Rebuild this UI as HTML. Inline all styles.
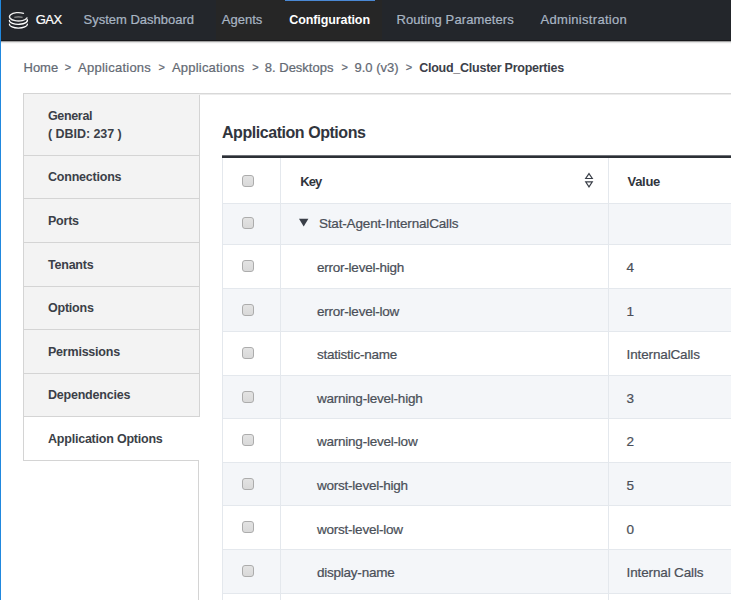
<!DOCTYPE html>
<html>
<head>
<meta charset="utf-8">
<style>
html,body{margin:0;padding:0;}
body{width:731px;height:600px;overflow:hidden;position:relative;background:#fff;font-family:"Liberation Sans",sans-serif;}
.a{position:absolute;white-space:nowrap;line-height:1;}
.r{-webkit-text-stroke:0.22px currentColor;}
.b{position:absolute;}
</style>
</head>
<body>
<div class="b" style="left:0px;top:0px;width:731px;height:40px;background:#23262b;"></div>
<div class="b" style="left:216px;top:0px;width:166px;height:40px;background:#262626;"></div>
<div class="b" style="left:285px;top:0px;width:90px;height:1px;background:#4a88d4;"></div>
<div class="b" style="left:0px;top:40px;width:731px;height:1px;background:#18191c;"></div>
<div class="b" style="left:0px;top:41px;width:731px;height:1px;background:#a2a2a2;"></div>
<div class="b" style="left:0px;top:42px;width:731px;height:1px;background:#e4e4e4;"></div>
<div class="b" style="left:0px;top:43px;width:731px;height:1px;background:#f9f9f9;"></div>
<svg style="position:absolute;left:0;top:0" width="40" height="40" viewBox="0 0 40 40">
  <path d="M14.3 17.2 Q18.4 16.5 22.6 17.2" fill="none" stroke="#9c9c9c" stroke-width="1.1"/>
  <g fill="none" stroke="#fff" stroke-width="1.3" stroke-linecap="round">
    <path d="M23.5 13.36 A8.9 4.2 0 1 0 27.0 17.9" stroke="#eeeeee"/>
    <path d="M9.4 20.5 A9 3.8 0 1 0 27.1 19.5"/>
    <path d="M9.4 24.2 A9 3.9 0 0 0 27.4 24.2"/>
  </g>
</svg>
<div class="a r" style="left:35.80px;top:13.40px;font-size:13px;color:#fff;letter-spacing:-0.6px;">GAX</div>
<div class="a r" style="left:83.50px;top:13.40px;font-size:13px;color:#a8b5c3;">System Dashboard</div>
<div class="a r" style="left:221.80px;top:13.40px;font-size:13px;color:#a8b5c3;">Agents</div>
<div class="a" style="left:289.30px;top:13.82px;font-size:12.5px;color:#fff;font-weight:bold;letter-spacing:-0.1px;">Configuration</div>
<div class="a r" style="left:396.40px;top:13.40px;font-size:13px;color:#a8b5c3;letter-spacing:0.1px;">Routing Parameters</div>
<div class="a r" style="left:540.50px;top:13.40px;font-size:13px;color:#a8b5c3;letter-spacing:0.3px;">Administration</div>
<div class="a r" style="left:23.50px;top:60.60px;font-size:13px;color:#636973;">Home</div>
<div class="a r" style="left:64.80px;top:62.29px;font-size:11px;color:#636973;">&gt;</div>
<div class="a r" style="left:78.00px;top:60.60px;font-size:13px;color:#636973;letter-spacing:0.25px;">Applications</div>
<div class="a r" style="left:158.60px;top:62.29px;font-size:11px;color:#636973;">&gt;</div>
<div class="a r" style="left:172.00px;top:60.60px;font-size:13px;color:#636973;letter-spacing:0.2px;">Applications</div>
<div class="a r" style="left:252.20px;top:62.29px;font-size:11px;color:#636973;">&gt;</div>
<div class="a r" style="left:264.80px;top:60.60px;font-size:13px;color:#636973;">8. Desktops</div>
<div class="a r" style="left:341.40px;top:62.29px;font-size:11px;color:#636973;">&gt;</div>
<div class="a r" style="left:354.50px;top:60.60px;font-size:13px;color:#636973;">9.0 (v3)</div>
<div class="a r" style="left:405.80px;top:62.29px;font-size:11px;color:#636973;">&gt;</div>
<div class="a" style="left:419.20px;top:62.12px;font-size:12.5px;color:#3c4049;font-weight:bold;letter-spacing:-0.25px;">Cloud_Cluster Properties</div>
<div class="b" style="left:23px;top:93px;width:177px;height:323px;background:#f3f3f3;"></div>
<div class="b" style="left:23px;top:416px;width:177px;height:44px;background:#fff;"></div>
<div class="b" style="left:23px;top:93px;width:177px;height:1px;background:#d4d4d4;"></div>
<div class="b" style="left:23px;top:93px;width:1px;height:368px;background:#d4d4d4;"></div>
<div class="b" style="left:199px;top:93px;width:1px;height:324px;background:#d4d4d4;"></div>
<div class="b" style="left:23px;top:155px;width:177px;height:1px;background:#d4d4d4;"></div>
<div class="b" style="left:23px;top:198px;width:177px;height:1px;background:#d4d4d4;"></div>
<div class="b" style="left:23px;top:242px;width:177px;height:1px;background:#d4d4d4;"></div>
<div class="b" style="left:23px;top:286px;width:177px;height:1px;background:#d4d4d4;"></div>
<div class="b" style="left:23px;top:329px;width:177px;height:1px;background:#d4d4d4;"></div>
<div class="b" style="left:23px;top:373px;width:177px;height:1px;background:#d4d4d4;"></div>
<div class="b" style="left:23px;top:416px;width:177px;height:1px;background:#d4d4d4;"></div>
<div class="b" style="left:23px;top:460px;width:176px;height:1px;background:#d4d4d4;"></div>
<div class="b" style="left:198px;top:460px;width:1px;height:140px;background:#d4d4d4;"></div>
<div class="b" style="left:199px;top:93px;width:532px;height:1px;background:#d8d8d8;"></div>
<div class="b" style="left:199px;top:94px;width:532px;height:1px;background:#ececec;"></div>
<div class="a" style="left:48.00px;top:110.12px;font-size:12.5px;color:#3b3f48;font-weight:bold;letter-spacing:-0.35px;">General</div>
<div class="a" style="left:48.00px;top:127.62px;font-size:12.5px;color:#3b3f48;font-weight:bold;letter-spacing:-0.05px;">( DBID: 237 )</div>
<div class="a" style="left:48.00px;top:171.42px;font-size:12.5px;color:#3b3f48;font-weight:bold;letter-spacing:-0.22px;">Connections</div>
<div class="a" style="left:48.00px;top:215.01px;font-size:12.5px;color:#3b3f48;font-weight:bold;letter-spacing:-0.22px;">Ports</div>
<div class="a" style="left:48.00px;top:258.60px;font-size:12.5px;color:#3b3f48;font-weight:bold;letter-spacing:-0.22px;">Tenants</div>
<div class="a" style="left:48.00px;top:302.19px;font-size:12.5px;color:#3b3f48;font-weight:bold;letter-spacing:-0.22px;">Options</div>
<div class="a" style="left:48.00px;top:345.78px;font-size:12.5px;color:#3b3f48;font-weight:bold;letter-spacing:-0.22px;">Permissions</div>
<div class="a" style="left:48.00px;top:389.37px;font-size:12.5px;color:#3b3f48;font-weight:bold;letter-spacing:-0.22px;">Dependencies</div>
<div class="a" style="left:48.00px;top:432.96px;font-size:12.5px;color:#3b3f48;font-weight:bold;letter-spacing:-0.22px;">Application Options</div>
<div class="a" style="left:222.00px;top:124.86px;font-size:16px;color:#31353d;font-weight:bold;letter-spacing:-0.45px;">Application Options</div>
<div class="b" style="left:222px;top:155px;width:509px;height:1px;background:#6f7278;"></div>
<div class="b" style="left:222px;top:156px;width:509px;height:2px;background:#2c3036;"></div>
<div class="b" style="left:222px;top:204px;width:509px;height:40px;background:#f4f6f9;"></div>
<div class="b" style="left:222px;top:289px;width:509px;height:42px;background:#f4f6f9;"></div>
<div class="b" style="left:222px;top:376px;width:509px;height:42px;background:#f4f6f9;"></div>
<div class="b" style="left:222px;top:463px;width:509px;height:42px;background:#f4f6f9;"></div>
<div class="b" style="left:222px;top:550px;width:509px;height:43px;background:#f4f6f9;"></div>
<div class="b" style="left:222px;top:203px;width:509px;height:1px;background:#e4e8ed;"></div>
<div class="b" style="left:222px;top:244px;width:509px;height:1px;background:#e4e8ed;"></div>
<div class="b" style="left:222px;top:288px;width:509px;height:1px;background:#e4e8ed;"></div>
<div class="b" style="left:222px;top:331px;width:509px;height:1px;background:#e4e8ed;"></div>
<div class="b" style="left:222px;top:375px;width:509px;height:1px;background:#e4e8ed;"></div>
<div class="b" style="left:222px;top:418px;width:509px;height:1px;background:#e4e8ed;"></div>
<div class="b" style="left:222px;top:462px;width:509px;height:1px;background:#e4e8ed;"></div>
<div class="b" style="left:222px;top:505px;width:509px;height:1px;background:#e4e8ed;"></div>
<div class="b" style="left:222px;top:549px;width:509px;height:1px;background:#e4e8ed;"></div>
<div class="b" style="left:222px;top:593px;width:509px;height:1px;background:#e4e8ed;"></div>
<div class="b" style="left:222px;top:636px;width:509px;height:1px;background:#e4e8ed;"></div>
<div class="b" style="left:222px;top:158px;width:1px;height:442px;background:#e4e8ed;"></div>
<div class="b" style="left:280px;top:158px;width:1px;height:442px;background:#e4e8ed;"></div>
<div class="b" style="left:608px;top:158px;width:1px;height:442px;background:#e4e8ed;"></div>
<div class="b" style="left:242px;top:175.00px;width:10px;height:10px;background:linear-gradient(#e3e3e3,#d9d9d9);border:1px solid #acacac;border-radius:3px;"></div>
<div class="a" style="left:300.30px;top:174.90px;font-size:13px;color:#31353d;font-weight:bold;letter-spacing:-0.9px;">Key</div>
<div class="a" style="left:627.50px;top:174.90px;font-size:13px;color:#31353d;font-weight:bold;letter-spacing:-0.3px;">Value</div>
<svg style="position:absolute;left:583px;top:171px" width="12" height="18" viewBox="0 0 12 18"><g fill="none" stroke="#3a3f48" stroke-width="1.15"><path d="M6 2.6 L9.3 7.5 L2.7 7.5 Z"/><path d="M2.7 10.9 L9.3 10.9 L6 15.9 Z"/></g></svg>
<div class="b" style="left:242px;top:216.70px;width:10px;height:10px;background:linear-gradient(#e3e3e3,#d9d9d9);border:1px solid #acacac;border-radius:3px;"></div>
<svg style="position:absolute;left:290px;top:210px" width="30" height="30"><polygon points="9,8.8 18.4,8.8 13.7,16.5" fill="#3a3f48"/></svg>
<div class="a r" style="left:318.90px;top:217.17px;font-size:13.5px;color:#4a4f58;letter-spacing:-0.16px;">Stat-Agent-InternalCalls</div>
<div class="b" style="left:242px;top:260.40px;width:10px;height:10px;background:linear-gradient(#e3e3e3,#d9d9d9);border:1px solid #acacac;border-radius:3px;"></div>
<div class="a r" style="left:316.90px;top:261.07px;font-size:13.5px;color:#4a4f58;letter-spacing:-0.22px;">error-level-high</div>
<div class="a r" style="left:626.60px;top:261.07px;font-size:13.5px;color:#4a4f58;letter-spacing:-0.14px;">4</div>
<div class="b" style="left:242px;top:303.90px;width:10px;height:10px;background:linear-gradient(#e3e3e3,#d9d9d9);border:1px solid #acacac;border-radius:3px;"></div>
<div class="a r" style="left:316.90px;top:304.65px;font-size:13.5px;color:#4a4f58;letter-spacing:-0.22px;">error-level-low</div>
<div class="a r" style="left:626.60px;top:304.65px;font-size:13.5px;color:#4a4f58;letter-spacing:-0.14px;">1</div>
<div class="b" style="left:242px;top:347.40px;width:10px;height:10px;background:linear-gradient(#e3e3e3,#d9d9d9);border:1px solid #acacac;border-radius:3px;"></div>
<div class="a r" style="left:316.90px;top:348.23px;font-size:13.5px;color:#4a4f58;letter-spacing:-0.22px;">statistic-name</div>
<div class="a r" style="left:626.60px;top:348.23px;font-size:13.5px;color:#4a4f58;letter-spacing:-0.14px;">InternalCalls</div>
<div class="b" style="left:242px;top:390.90px;width:10px;height:10px;background:linear-gradient(#e3e3e3,#d9d9d9);border:1px solid #acacac;border-radius:3px;"></div>
<div class="a r" style="left:316.90px;top:391.81px;font-size:13.5px;color:#4a4f58;letter-spacing:-0.22px;">warning-level-high</div>
<div class="a r" style="left:626.60px;top:391.81px;font-size:13.5px;color:#4a4f58;letter-spacing:-0.14px;">3</div>
<div class="b" style="left:242px;top:434.40px;width:10px;height:10px;background:linear-gradient(#e3e3e3,#d9d9d9);border:1px solid #acacac;border-radius:3px;"></div>
<div class="a r" style="left:316.90px;top:435.39px;font-size:13.5px;color:#4a4f58;letter-spacing:-0.22px;">warning-level-low</div>
<div class="a r" style="left:626.60px;top:435.39px;font-size:13.5px;color:#4a4f58;letter-spacing:-0.14px;">2</div>
<div class="b" style="left:242px;top:477.90px;width:10px;height:10px;background:linear-gradient(#e3e3e3,#d9d9d9);border:1px solid #acacac;border-radius:3px;"></div>
<div class="a r" style="left:316.90px;top:478.97px;font-size:13.5px;color:#4a4f58;letter-spacing:-0.22px;">worst-level-high</div>
<div class="a r" style="left:626.60px;top:478.97px;font-size:13.5px;color:#4a4f58;letter-spacing:-0.14px;">5</div>
<div class="b" style="left:242px;top:521.40px;width:10px;height:10px;background:linear-gradient(#e3e3e3,#d9d9d9);border:1px solid #acacac;border-radius:3px;"></div>
<div class="a r" style="left:316.90px;top:522.55px;font-size:13.5px;color:#4a4f58;letter-spacing:-0.22px;">worst-level-low</div>
<div class="a r" style="left:626.60px;top:522.55px;font-size:13.5px;color:#4a4f58;letter-spacing:-0.14px;">0</div>
<div class="b" style="left:242px;top:565.40px;width:10px;height:10px;background:linear-gradient(#e3e3e3,#d9d9d9);border:1px solid #acacac;border-radius:3px;"></div>
<div class="a r" style="left:316.90px;top:566.13px;font-size:13.5px;color:#4a4f58;letter-spacing:-0.22px;">display-name</div>
<div class="a r" style="left:626.60px;top:566.13px;font-size:13.5px;color:#4a4f58;letter-spacing:-0.14px;">Internal Calls</div>
<div class="b" style="left:242px;top:608.90px;width:10px;height:10px;background:linear-gradient(#e3e3e3,#d9d9d9);border:1px solid #acacac;border-radius:3px;"></div>
<div class="b" style="left:0px;top:0px;width:1px;height:600px;background:#2188de;"></div>
</body>
</html>
